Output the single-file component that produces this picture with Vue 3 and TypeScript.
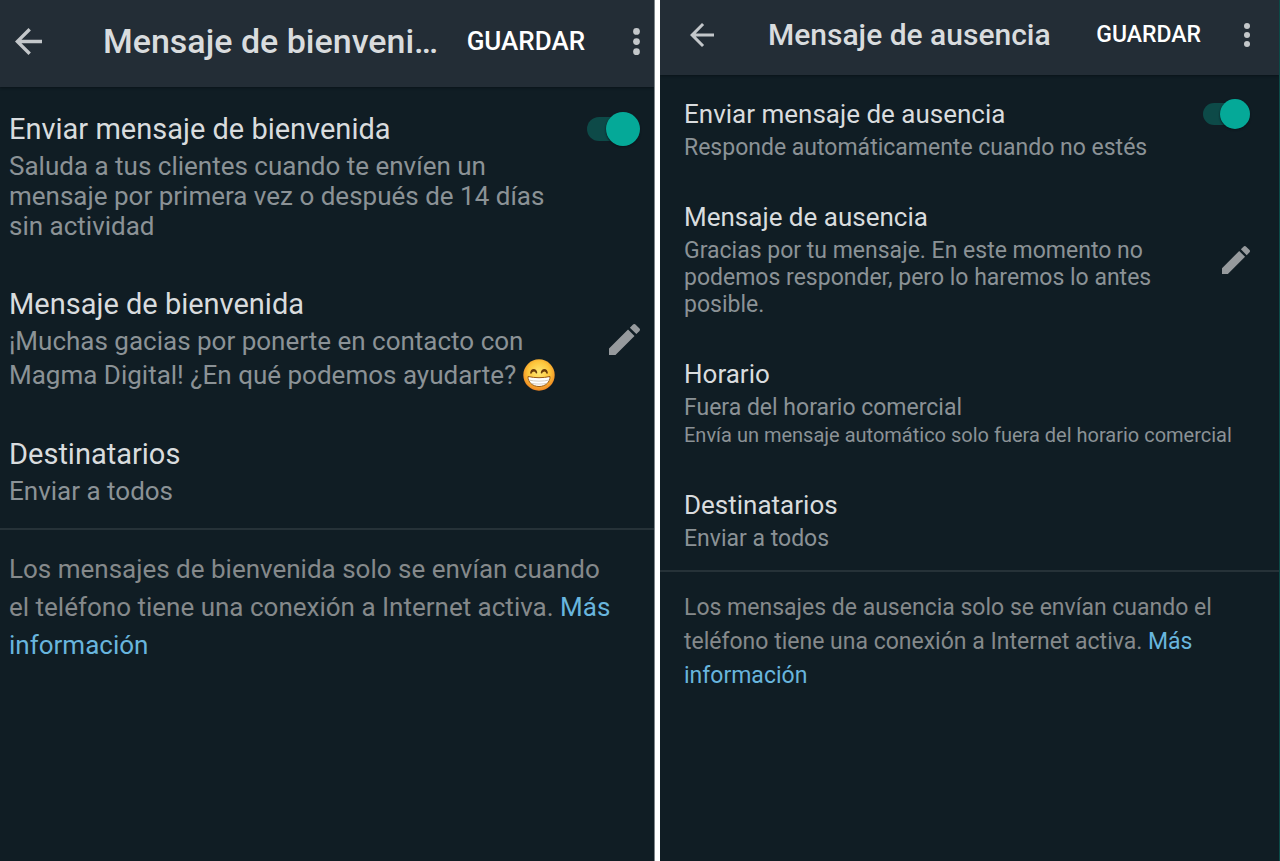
<script setup lang="ts">
import { ref } from 'vue'

interface Line {
  text: string
  small?: boolean
  emoji?: boolean
}

interface Item {
  title: string
  lines: Line[]
  control?: 'switch' | 'edit'
}

interface Panel {
  id: string
  title: string
  items: Item[]
  note: string
}

const panels: Panel[] = [
  {
    id: 'welcome',
    title: 'Mensaje de bienvenida',
    items: [
      {
        title: 'Enviar mensaje de bienvenida',
        lines: [{ text: 'Saluda a tus clientes cuando te envíen un mensaje por primera vez o después de 14 días sin actividad' }],
        control: 'switch',
      },
      {
        title: 'Mensaje de bienvenida',
        lines: [{ text: '¡Muchas gacias por ponerte en contacto con Magma Digital! ¿En qué podemos ayudarte?', emoji: true }],
        control: 'edit',
      },
      { title: 'Destinatarios', lines: [{ text: 'Enviar a todos' }] },
    ],
    note: 'Los mensajes de bienvenida solo se envían cuando el teléfono tiene una conexión a Internet activa.',
  },
  {
    id: 'away',
    title: 'Mensaje de ausencia',
    items: [
      {
        title: 'Enviar mensaje de ausencia',
        lines: [{ text: 'Responde automáticamente cuando no estés' }],
        control: 'switch',
      },
      {
        title: 'Mensaje de ausencia',
        lines: [{ text: 'Gracias por tu mensaje. En este momento no podemos responder, pero lo haremos lo antes posible.' }],
        control: 'edit',
      },
      {
        title: 'Horario',
        lines: [
          { text: 'Fuera del horario comercial' },
          { text: 'Envía un mensaje automático solo fuera del horario comercial', small: true },
        ],
      },
      { title: 'Destinatarios', lines: [{ text: 'Enviar a todos' }] },
    ],
    note: 'Los mensajes de ausencia solo se envían cuando el teléfono tiene una conexión a Internet activa.',
  },
]

const enabled = ref<Record<string, boolean>>({ welcome: true, away: true })
</script>

<template>
  <main class="screens">
    <section v-for="panel in panels" :key="panel.id" class="panel" :class="panel.id">
      <header class="bar">
        <button type="button" class="icon-button back" aria-label="Atrás">
          <svg class="back-icon" viewBox="4 4 16 16" aria-hidden="true">
            <path d="M20 11H7.83l5.59-5.59L12 4l-8 8 8 8 1.41-1.41L7.83 13H20v-2z" />
          </svg>
        </button>
        <h1 class="bar-title">{{ panel.title }}</h1>
        <button type="button" class="save">GUARDAR</button>
        <button type="button" class="icon-button" aria-label="Más opciones">
          <svg class="more-icon" viewBox="10 4 4 16" aria-hidden="true">
            <circle cx="12" cy="6" r="2" />
            <circle cx="12" cy="12" r="2" />
            <circle cx="12" cy="18" r="2" />
          </svg>
        </button>
      </header>

      <div class="items">
        <div v-for="(item, i) in panel.items" :key="item.title" class="item" :class="item.control">
          <div class="item-text">
            <h2 class="item-title">
              <label v-if="item.control === 'switch'" :for="`${panel.id}-${i}`">{{ item.title }}</label>
              <template v-else>{{ item.title }}</template>
            </h2>
            <p v-for="line in item.lines" :key="line.text" class="line" :class="{ small: line.small }">
              {{ line.text }}
              <svg v-if="line.emoji" class="emoji" viewBox="0 0 32 32" role="img" aria-label="Cara sonriente">
                <defs>
                  <radialGradient id="face" cx="50%" cy="42%" r="58%">
                    <stop offset="0" stop-color="#ffe873" />
                    <stop offset="0.6" stop-color="#fdc53a" />
                    <stop offset="1" stop-color="#ee8420" />
                  </radialGradient>
                </defs>
                <circle cx="16" cy="16" r="15.7" fill="url(#face)" />
                <g fill="none" stroke="#6b3d0c" stroke-width="1.7" stroke-linecap="round" stroke-linejoin="round">
                  <path d="M8 13.8c.5-4 4.7-4 5.4-.2M9.3 12.300c1-1 2.200-1 3 0" />
                  <path d="M18.6 13.600c.7-3.800 4.900-3.800 5.400.2M19.700 12.300c1-1 2.200-1 3 0" />
                </g>
                <path d="M5 17.500c7 1.600 15 1.600 22 0 .3 5.500-4.500 10-11 10S4.700 23 5 17.500z" fill="#fff" stroke="#9a5a13" stroke-width="1" />
                <path d="M5.500 21c6.500 1.500 14.500 1.500 21 0M8 24.300c5 1 11 1 16 0" fill="none" stroke="#c3b9a5" stroke-width=".7" />
              </svg>
            </p>
          </div>
          <input
            v-if="item.control === 'switch'"
            :id="`${panel.id}-${i}`"
            v-model="enabled[panel.id]"
            class="toggle"
            type="checkbox"
            role="switch"
          />
          <button v-if="item.control === 'edit'" type="button" class="icon-button" aria-label="Editar mensaje">
            <svg class="edit-icon" viewBox="3 3 18 18" aria-hidden="true">
              <path d="M3 17.250V21h3.750L17.810 9.940l-3.750-3.750L3 17.250zM20.710 7.040c.39-.39.39-1.020 0-1.410l-2.340-2.340c-.39-.39-1.020-.39-1.410 0l-1.830 1.830 3.750 3.750 1.830-1.830z" />
            </svg>
          </button>
        </div>
      </div>

      <p class="note">{{ panel.note }} <a href="#">Más información</a></p>
    </section>
  </main>
</template>

<style>
body {
  margin: 0;
  background: #101d24;
}
</style>

<style scoped>
.screens {
  display: grid;
  grid-template-columns: 655fr 620fr;
  column-gap: 5px;
  min-height: 100vh;
  background: #fff;
  font-family: Roboto, "Liberation Sans", sans-serif;
}

.panel {
  min-width: 0;
  overflow: clip;
  background: #101d24;
  color: #d9dcde;
}

.welcome {
  --bar-height: 82px;
  --bar-bottom: 5px;
  --bar-start: 15px;
  --end: 14px;
  --start: 9px;
  --title-gap: 61px;
  --title-size: 34px;
  --save-size: 26px;
  --save-gap: 48px;
  --icon: 27px;
  --dots: 7px;
  --head-size: 29px;
  --head-line: 34px;
  --text-size: 26px;
  --text-line: 30px;
  --text-gap: 5px;
  --item-gap: 46px;
  --top: 25px;
  --bottom: 22px;
  --knob: 34px;
  --track: 24px;
  --switch: 53px;
  --pencil: 31px;
  --note-line: 38px;
  --note-top: 20px;
  --note-end: 36px;
  border-right: 1px solid #7d8589;
}

.away {
  --bar-height: 69px;
  --bar-bottom: 6px;
  --bar-start: 30px;
  --end: 29px;
  --start: 24px;
  --title-gap: 54px;
  --title-size: 30px;
  --save-size: 23px;
  --save-gap: 43px;
  --icon: 24px;
  --dots: 6px;
  --head-size: 26px;
  --head-line: 31px;
  --text-size: 23px;
  --text-line: 27px;
  --text-gap: 4px;
  --item-gap: 41px;
  --top: 24px;
  --bottom: 18px;
  --knob: 30px;
  --track: 22px;
  --switch: 47px;
  --pencil: 28px;
  --note-line: 34px;
  --note-top: 19px;
  --note-end: 45px;
  border-right: 1px solid #0b4a47;
}

.bar {
  display: flex;
  align-items: center;
  min-height: var(--bar-height);
  padding: 0 var(--end) var(--bar-bottom) var(--bar-start);
  background: #232d36;
  box-shadow: 0 1px 2px #0a141a;
}

button {
  flex: none;
  margin: 0;
  padding: 0;
  border: 0;
  background: none;
  color: inherit;
  font: inherit;
  cursor: pointer;
}

.icon-button {
  display: flex;
}

svg {
  fill: currentColor;
}

.bar .icon-button {
  color: #c3c7ca;
}

.back-icon {
  width: var(--icon);
  height: var(--icon);
}

.more-icon {
  width: var(--dots);
  height: var(--icon);
}

.bar-title {
  flex: 1;
  min-width: 0;
  margin: 0 28px 0 var(--title-gap);
  overflow: hidden;
  font-size: var(--title-size);
  font-weight: 500;
  line-height: 44px;
  text-overflow: ellipsis;
  white-space: nowrap;
}

.save {
  margin-right: var(--save-gap);
  color: #fff;
  font-size: var(--save-size);
  font-weight: 500;
}

.items {
  display: flex;
  flex-direction: column;
  gap: var(--item-gap);
  padding: var(--top) var(--end) var(--bottom) var(--start);
  border-bottom: 2px solid #263238;
}

.item {
  display: flex;
  align-items: center;
  justify-content: space-between;
  gap: 40px;
}

.item.switch {
  align-items: flex-start;
}

.item-title {
  margin: 0 0 var(--text-gap);
  font-size: var(--head-size);
  font-weight: 400;
  line-height: var(--head-line);
}

.line {
  margin: 0;
  color: #8b9296;
  font-size: var(--text-size);
  line-height: var(--text-line);
}

.line.small {
  font-size: 20px;
  line-height: 28px;
}

.emoji {
  width: 32px;
  height: 32px;
  margin-top: 3px;
  vertical-align: -7px;
}

.toggle {
  position: relative;
  flex: none;
  display: flex;
  align-items: center;
  justify-content: flex-end;
  width: var(--switch);
  height: var(--knob);
  margin: 0;
  appearance: none;
  cursor: pointer;
}

.toggle::before {
  content: "";
  position: absolute;
  left: 0;
  right: 5px;
  height: var(--track);
  border-radius: 12px;
  background: #0d4a48;
}

.toggle::after {
  content: "";
  position: relative;
  width: var(--knob);
  height: var(--knob);
  border-radius: 50%;
  background: #05a998;
  box-shadow: 0 1px 2px #0a141a;
}

.toggle:not(:checked) {
  justify-content: flex-start;
}

.item .icon-button {
  color: #969a9d;
}

.edit-icon {
  width: var(--pencil);
  height: var(--pencil);
}

.note {
  margin: 0;
  padding: var(--note-top) var(--note-end) 24px var(--start);
  color: #85898b;
  font-size: var(--text-size);
  line-height: var(--note-line);
}

.note a {
  color: #68b5dd;
  text-decoration: none;
}
</style>
